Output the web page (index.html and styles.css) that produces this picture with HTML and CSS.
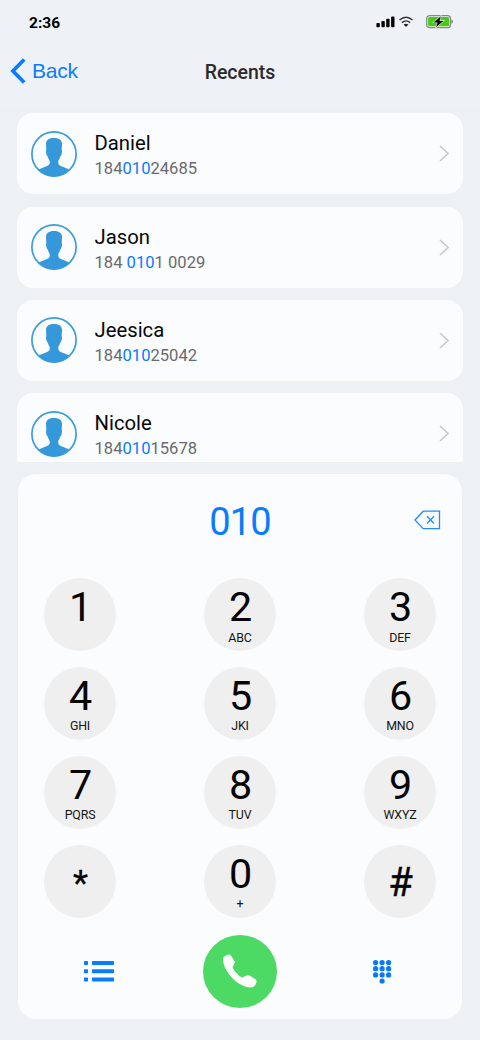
FILE: index.html
```html
<!DOCTYPE html>
<html lang="en">
<head>
<meta charset="utf-8">
<title>Recents</title>
<link rel="stylesheet" href="styles.css">
</head>
<body>
<svg class="defs" width="0" height="0">
  <symbol id="avatar" viewBox="0 0 46 46">
    <circle cx="23" cy="23" r="22.1" fill="none" stroke="#3b9ddd" stroke-width="1.7"/>
    <path fill="#3598db" d="M23 7C17.2 7 14.8 9.7 15 13.5L15.3 19C14.8 19.8 14.9 21.5 15.5 23.4C15.8 24.5 16.2 25 16.8 25.4C17.2 27.2 18 28.7 18.7 29.8V32.5C17.5 35.8 12.5 35.5 7.5 38.8C11.5 43.1 17 45.5 23 45.5S34.5 43.1 38.5 38.8C33.5 35.5 28.5 35.8 27.3 32.5V29.8C28 28.7 28.8 27.2 29.2 25.4C29.8 25 30.2 24.5 30.5 23.4C31.1 21.5 31.2 19.8 30.7 19L31 13.5C31.2 9.7 28.8 7 23 7Z"/>
  </symbol>
  <symbol id="chevron" viewBox="0 0 10 17">
    <path d="M1 1L9 8.5L1 16" fill="none" stroke="#c9cacd" stroke-width="1.6"/>
  </symbol>
</svg>
<div class="screen">
  <header class="header">
    <div class="status">
      <span class="time">2:36</span>
      <div class="status-icons">
        <svg class="signal" viewBox="0 0 19 12"><rect x=".4" y="7" width="3.4" height="4.3" rx="1"/><rect x="5.4" y="5" width="3.4" height="6.3" rx="1"/><rect x="10.2" y="2.8" width="3.4" height="8.5" rx="1"/><rect x="15.1" y=".4" width="3.4" height="10.9" rx="1"/></svg>
        <svg class="wifi" viewBox="0 0 14 12"><path d="M.5 4Q7-1.4 13.5 4M2.8 6.6Q7 3.2 11.2 6.6" fill="none" stroke="#333437" stroke-width="1.4"/><path d="M4.6 8.5Q7 6.8 9.4 8.5L7 10.9Z" fill="#222326"/></svg>
        <svg class="battery" viewBox="0 0 28 14"><rect x=".7" y=".7" width="23.8" height="12" rx="3" fill="#f1f3f5" stroke="#85888b" stroke-width="1.3"/><rect x="2.1" y="2.1" width="21" height="9.2" rx="1.5" fill="#48cb13"/><path d="M25.5 4.6Q27 5 27 6.7T25.5 8.8Z" fill="#77797c"/><path d="M14.8 1.2L7.7 7.5H11.6L10 12.3L17.4 5.9H13.5Z" fill="#000" stroke="#e3f5dc" stroke-width="1.2" paint-order="stroke"/></svg>
      </div>
    </div>
    <nav class="nav">
      <a class="back"><svg viewBox="0 0 16 26"><path d="M14.2 1.5L2.9 13L14.2 24.5" fill="none" stroke="#0a7cff" stroke-width="3.7"/></svg><span>Back</span></a>
      <h1>Recents</h1>
    </nav>
  </header>
  <main class="contacts">
    <article class="contact"><svg class="avatar"><use href="#avatar"/></svg><div class="info"><div class="name">Daniel</div><div class="number">184<b>010</b>24685</div></div><svg class="chevron"><use href="#chevron"/></svg></article>
    <article class="contact"><svg class="avatar"><use href="#avatar"/></svg><div class="info"><div class="name">Jason</div><div class="number">184 <b>010</b>1 0029</div></div><svg class="chevron"><use href="#chevron"/></svg></article>
    <article class="contact"><svg class="avatar"><use href="#avatar"/></svg><div class="info"><div class="name">Jeesica</div><div class="number">184<b>010</b>25042</div></div><svg class="chevron"><use href="#chevron"/></svg></article>
    <article class="contact"><svg class="avatar"><use href="#avatar"/></svg><div class="info"><div class="name">Nicole</div><div class="number">184<b>010</b>15678</div></div><svg class="chevron"><use href="#chevron"/></svg></article>
  </main>
  <section class="dialer">
    <div class="entry">
      <span class="typed">010</span>
      <svg class="delete" viewBox="0 0 27 20"><path d="M1 10L9.2 1.2H25.5V18.6H9.2Z M13 6.2L20 13.5M20 6.2L13 13.5" fill="none" stroke="#248bff" stroke-width="1.3"/></svg>
    </div>
    <div class="keys">
      <div class="key"><span class="digit">1</span></div>
      <div class="key"><span class="digit">2</span><span class="letters">ABC</span></div>
      <div class="key"><span class="digit">3</span><span class="letters">DEF</span></div>
      <div class="key"><span class="digit">4</span><span class="letters">GHI</span></div>
      <div class="key"><span class="digit">5</span><span class="letters">JKI</span></div>
      <div class="key"><span class="digit">6</span><span class="letters">MNO</span></div>
      <div class="key"><span class="digit">7</span><span class="letters">PQRS</span></div>
      <div class="key"><span class="digit">8</span><span class="letters">TUV</span></div>
      <div class="key"><span class="digit">9</span><span class="letters">WXYZ</span></div>
      <div class="key"><span class="digit star">*</span></div>
      <div class="key"><span class="digit">0</span><span class="letters">+</span></div>
      <div class="key"><span class="digit hash">#</span></div>
    </div>
    <footer class="actions">
      <svg class="list" viewBox="0 0 30 21" fill="#0a7cff"><rect x="0" y="0" width="4" height="4" rx=".7"/><rect x="8" y="0" width="22" height="4" rx=".7"/><rect x="0" y="8.2" width="4" height="4" rx=".7"/><rect x="8" y="8.2" width="22" height="4" rx=".7"/><rect x="0" y="16.4" width="4" height="4" rx=".7"/><rect x="8" y="16.4" width="22" height="4" rx=".7"/></svg>
      <div class="call"><svg viewBox="0 0 34 34"><path fill="#fff" d="M.4 3.8C1.2 2 4.8.2 7.2.5L11.8 7.6Q12.1 8.4 11.7 9L9.8 12.6Q9.5 13.4 9.9 14.3C12 18 15.2 21.7 18.7 23.2Q19.5 23.5 20.3 23L23.3 21.6Q25.8 20.9 27.5 21.9L32.8 25.5Q33.8 26.4 33.5 28C32.7 31 31.5 33 29.2 33.3C23 34.2 14.5 29.8 8.7 23.5C3 17.2-1.1 8.8.4 3.8Z"/></svg></div>
      <svg class="pad" viewBox="0 0 19 24" fill="#0879fb"><circle cx="2.6" cy="2.6" r="2.6"/><circle cx="9.1" cy="2.6" r="2.6"/><circle cx="15.6" cy="2.6" r="2.6"/><circle cx="2.6" cy="8.7" r="2.6"/><circle cx="9.1" cy="8.7" r="2.6"/><circle cx="15.6" cy="8.7" r="2.6"/><circle cx="2.6" cy="14.9" r="2.6"/><circle cx="9.1" cy="14.9" r="2.6"/><circle cx="15.6" cy="14.9" r="2.6"/><circle cx="9.1" cy="21" r="2.6"/></svg>
    </footer>
  </section>
</div>
</body>
</html>
```
FILE: styles.css
```css
* { box-sizing: border-box; }
body { margin: 0; font-family: Roboto, sans-serif; background: #edf1f4; }
svg { display: block; flex: none; }
.defs { position: absolute; }
.screen { width: 480px; height: 1040px; overflow: hidden; display: flex; flex-direction: column; }
.header { height: 107px; flex: none; background: #eef1f6; }
.status { height: 44px; display: flex; justify-content: space-between; padding: 0 26px 0 29px; align-items: center; }
.time { font-size: 15.5px; font-weight: 700; line-height: 20px; padding-top: 1px; }
.status-icons { display: flex; align-items: center; }
.signal { width: 19px; height: 12px; }
.wifi { width: 14px; height: 12px; margin-left: 4px; }
.battery { width: 28px; height: 14px; margin-left: 13px; }
.nav { height: 56px; display: grid; grid-template-columns: 1fr auto 1fr; align-items: center; padding: 0 10px; }
.back { display: flex; align-items: center; gap: 6px; color: #0a7cff; font: 21px/26px "Liberation Sans", sans-serif; letter-spacing: -.2px; padding-bottom: 2px; }
.back svg { width: 16px; height: 26px; }
h1 { margin: 0; font-size: 19.5px; font-weight: 500; line-height: 24px; padding-top: 2px; color: #2b2b2d; }
.contacts { height: 355px; flex: none; overflow: hidden; padding: 6.2px 17px 0; display: flex; flex-direction: column; gap: 12.4px; }
.contact { height: 81px; flex: none; background: #fbfcfe; border-radius: 16px; display: flex; align-items: center; padding: 0 13px 0 14px; }
.avatar { width: 46px; height: 46px; }
.info { flex: 1; padding: 5px 0 0 17.5px; }
.name { font-size: 20.3px; line-height: 25px; color: #080808; }
.number { font-size: 16.6px; line-height: 25px; color: #6a6a6c; }
.number b { font-weight: 400; color: #087bff; }
.chevron { width: 10px; height: 17px; margin-right: 1px; }
.dialer { width: 444px; height: 544.5px; flex: none; margin: 12px auto 0; background: #fbfcfe; border-radius: 18px; display: flex; flex-direction: column; }
.entry { height: 104px; padding: 0 21px; display: grid; grid-template-columns: 1fr auto 1fr; }
.typed { grid-column: 2; font-size: 38px; line-height: 48px; padding-top: 24px; letter-spacing: -.8px; color: #087bff; }
.delete { width: 27px; height: 20px; justify-self: end; margin-top: 36px; }
.keys { display: grid; grid-template-columns: repeat(3, 72px); grid-auto-rows: 73px; row-gap: 15.9px; justify-content: space-between; padding: 0 26px; }
.key { border-radius: 50%; background: #efefef; display: flex; flex-direction: column; align-items: center; color: #050505; }
.digit { font-size: 41.3px; line-height: 48px; height: 48px; padding: 5px 0 0 1px; }
.letters { font-size: 12.4px; line-height: 16px; padding-top: 3.6px; color: #151515; letter-spacing: -.15px; }
.star { font-size: 35px; padding-top: 15px; -webkit-text-stroke: .3px #050505; }
.hash { font-size: 40px; padding-top: 14px; -webkit-text-stroke: .3px #050505; }
.actions { margin-top: 17.3px; height: 73px; display: grid; grid-template-columns: 1fr 74px 1fr; align-items: center; }
.list { width: 30px; height: 21px; margin-left: 66px; }
.call { width: 74px; height: 73px; border-radius: 50%; background: #4cd964; display: grid; place-items: center; }
.call svg { width: 34px; height: 34px; }
.pad { width: 19px; height: 24px; margin: 1px 0 0 96px; }
```
